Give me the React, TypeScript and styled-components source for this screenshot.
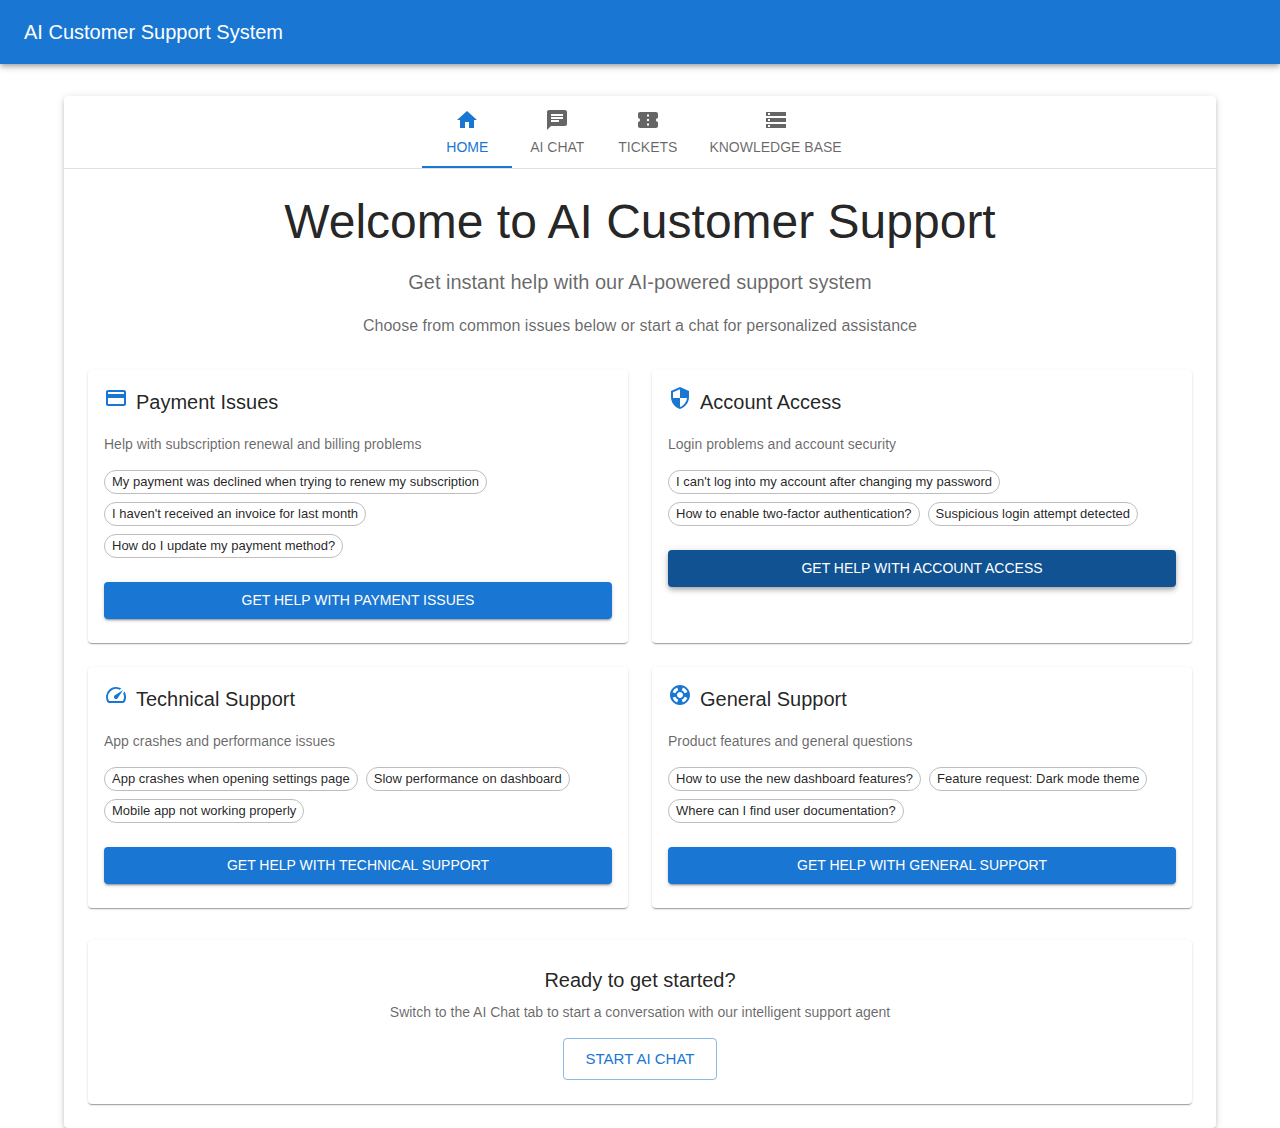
import React, { useState } from "react";
import styled, { createGlobalStyle, css } from "styled-components";
import type { IconType } from "react-icons";
import {
  MdHome,
  MdChat,
  MdConfirmationNumber,
  MdStorage,
  MdPayment,
  MdSecurity,
  MdSpeed,
  MdSupport,
} from "react-icons/md";

const color = {
  primary: "#1976d2",
  primaryDark: "#115293",
  text: "rgba(0, 0, 0, 0.87)",
  muted: "rgba(0, 0, 0, 0.6)",
  divider: "rgba(0, 0, 0, 0.12)",
};

const shadow = {
  low: "0 2px 1px -1px rgba(0,0,0,0.2), 0 1px 1px 0 rgba(0,0,0,0.14), 0 1px 3px 0 rgba(0,0,0,0.12)",
  button: "0 3px 1px -2px rgba(0,0,0,0.2), 0 2px 2px 0 rgba(0,0,0,0.14), 0 1px 5px 0 rgba(0,0,0,0.12)",
  paper: "0 3px 3px -2px rgba(0,0,0,0.2), 0 3px 4px 0 rgba(0,0,0,0.14), 0 1px 8px 0 rgba(0,0,0,0.12)",
  high: "0 2px 4px -1px rgba(0,0,0,0.2), 0 4px 5px 0 rgba(0,0,0,0.14), 0 1px 10px 0 rgba(0,0,0,0.12)",
};

const GlobalStyle = createGlobalStyle`
  *, *::before, *::after { box-sizing: border-box; }
  body {
    margin: 0;
    background: #fff;
    color: ${color.text};
    font-family: "Liberation Sans", Helvetica, Arial, sans-serif;
    font-size: 16px;
    line-height: 24px;
    -webkit-font-smoothing: antialiased;
  }
  button { font-family: inherit; cursor: pointer; }
`;

const AppBar = styled.header`
  position: relative;
  display: flex;
  align-items: center;
  min-height: 64px;
  padding: 0 24px;
  background: ${color.primary};
  color: #fff;
  box-shadow: ${shadow.high};
`;

const BrandName = styled.div`
  font-size: 20px;
  line-height: 32px;
`;

const Main = styled.main`
  max-width: 1200px;
  margin: 32px auto;
  padding: 0 24px;

  @media (min-width: 1200px) {
    max-width: 1536px;
    padding: 0 64px;
  }
`;

const Paper = styled.div`
  background: #fff;
  border-radius: 4px;
  box-shadow: ${shadow.paper};
`;

const TabBar = styled.nav`
  display: flex;
  justify-content: center;
  border-bottom: 1px solid ${color.divider};
`;

const Tab = styled.button<{ $active: boolean }>`
  display: flex;
  flex-direction: column;
  align-items: center;
  justify-content: center;
  gap: 6px;
  min-width: 90px;
  height: 72px;
  padding: 12px 16px;
  border: 0;
  background: none;
  color: ${(p) => (p.$active ? color.primary : color.muted)};
  box-shadow: ${(p) => (p.$active ? `inset 0 -2px 0 ${color.primary}` : "none")};
  font-size: 14px;
  line-height: 18px;
  text-transform: uppercase;

  svg { width: 24px; height: 24px; }
`;

const Panel = styled.section`
  padding: 24px;
`;

const Hero = styled.div`
  margin-bottom: 32px;
  text-align: center;
`;

const HeroTitle = styled.h1`
  margin: 0 0 16px;
  font-size: 48px;
  font-weight: 400;
  line-height: 57px;
`;

const HeroSubtitle = styled.p`
  margin: 0 0 16px;
  color: ${color.muted};
  font-size: 20px;
  line-height: 32px;
`;

const HeroText = styled.p`
  margin: 0;
  color: ${color.muted};
`;

const CardGrid = styled.div`
  display: grid;
  grid-template-columns: repeat(auto-fit, minmax(min(100%, 400px), 1fr));
  gap: 24px;
  margin-bottom: 32px;
`;

const Card = styled.article`
  padding: 16px 16px 24px;
  background: #fff;
  border-radius: 4px;
  box-shadow: ${shadow.low};
`;

const CardHeader = styled.div`
  display: flex;
  align-items: flex-start;
  gap: 8px;
  margin-bottom: 16px;

  svg {
    flex: none;
    width: 24px;
    height: 24px;
    color: ${color.primary};
  }
`;

const Heading = styled.h2`
  margin: 0;
  font-size: 20px;
  font-weight: 400;
  line-height: 32px;
`;

const Description = styled.p`
  margin: 0 0 16px;
  color: ${color.muted};
  font-size: 14px;
  line-height: 20px;
`;

const ChipList = styled.div`
  display: flex;
  flex-wrap: wrap;
  gap: 8px;
  margin-bottom: 24px;
`;

const Chip = styled.button`
  height: 24px;
  padding: 0 7px;
  border: 1px solid #bdbdbd;
  border-radius: 16px;
  background: none;
  color: ${color.text};
  font-size: 13px;
  line-height: 20px;
`;

const buttonText = css`
  border-radius: 4px;
  text-transform: uppercase;
`;

const HelpButton = styled.button<{ $raised: boolean }>`
  ${buttonText}
  width: 100%;
  padding: 6px 16px;
  border: 0;
  background: ${(p) => (p.$raised ? color.primaryDark : color.primary)};
  box-shadow: ${(p) => (p.$raised ? shadow.high : shadow.button)};
  color: #fff;
  font-size: 14px;
  line-height: 25px;
`;

const ChatButton = styled.button`
  ${buttonText}
  padding: 8px 22px;
  border: 1px solid rgba(25, 118, 210, 0.5);
  background: none;
  color: ${color.primary};
  font-size: 15px;
  line-height: 24px;
`;

const CallToAction = styled(Card)`
  display: flex;
  flex-direction: column;
  align-items: center;
  padding: 24px;
  text-align: center;

  ${Heading} { margin-bottom: 6px; }
`;

const tabs: { label: string; Icon: IconType }[] = [
  { label: "Home", Icon: MdHome },
  { label: "AI Chat", Icon: MdChat },
  { label: "Tickets", Icon: MdConfirmationNumber },
  { label: "Knowledge Base", Icon: MdStorage },
];

const topics: { title: string; description: string; Icon: IconType; issues: string[] }[] = [
  {
    title: "Payment Issues",
    description: "Help with subscription renewal and billing problems",
    Icon: MdPayment,
    issues: [
      "My payment was declined when trying to renew my subscription",
      "I haven't received an invoice for last month",
      "How do I update my payment method?",
    ],
  },
  {
    title: "Account Access",
    description: "Login problems and account security",
    Icon: MdSecurity,
    issues: [
      "I can't log into my account after changing my password",
      "How to enable two-factor authentication?",
      "Suspicious login attempt detected",
    ],
  },
  {
    title: "Technical Support",
    description: "App crashes and performance issues",
    Icon: MdSpeed,
    issues: [
      "App crashes when opening settings page",
      "Slow performance on dashboard",
      "Mobile app not working properly",
    ],
  },
  {
    title: "General Support",
    description: "Product features and general questions",
    Icon: MdSupport,
    issues: [
      "How to use the new dashboard features?",
      "Feature request: Dark mode theme",
      "Where can I find user documentation?",
    ],
  },
];

export default function App() {
  const [activeTab, setActiveTab] = useState("Home");
  const [focusedTopic, setFocusedTopic] = useState("Account Access");

  return (
    <>
      <GlobalStyle />
      <AppBar>
        <BrandName>AI Customer Support System</BrandName>
      </AppBar>
      <Main>
        <Paper>
          <TabBar aria-label="Support sections">
            {tabs.map(({ label, Icon }) => (
              <Tab
                key={label}
                type="button"
                $active={label === activeTab}
                aria-current={label === activeTab ? "page" : undefined}
                onClick={() => setActiveTab(label)}
              >
                <Icon aria-hidden />
                {label}
              </Tab>
            ))}
          </TabBar>
          <Panel>
            <Hero>
              <HeroTitle>Welcome to AI Customer Support</HeroTitle>
              <HeroSubtitle>Get instant help with our AI-powered support system</HeroSubtitle>
              <HeroText>Choose from common issues below or start a chat for personalized assistance</HeroText>
            </Hero>
            <CardGrid>
              {topics.map(({ title, description, Icon, issues }) => (
                <Card key={title}>
                  <CardHeader>
                    <Icon aria-hidden />
                    <Heading>{title}</Heading>
                  </CardHeader>
                  <Description>{description}</Description>
                  <ChipList>
                    {issues.map((issue) => (
                      <Chip key={issue} type="button">{issue}</Chip>
                    ))}
                  </ChipList>
                  <HelpButton
                    type="button"
                    $raised={title === focusedTopic}
                    onMouseEnter={() => setFocusedTopic(title)}
                  >
                    Get Help with {title}
                  </HelpButton>
                </Card>
              ))}
            </CardGrid>
            <CallToAction>
              <Heading>Ready to get started?</Heading>
              <Description>
                Switch to the AI Chat tab to start a conversation with our intelligent support agent
              </Description>
              <ChatButton type="button" onClick={() => setActiveTab("AI Chat")}>
                Start AI Chat
              </ChatButton>
            </CallToAction>
          </Panel>
        </Paper>
      </Main>
    </>
  );
}
